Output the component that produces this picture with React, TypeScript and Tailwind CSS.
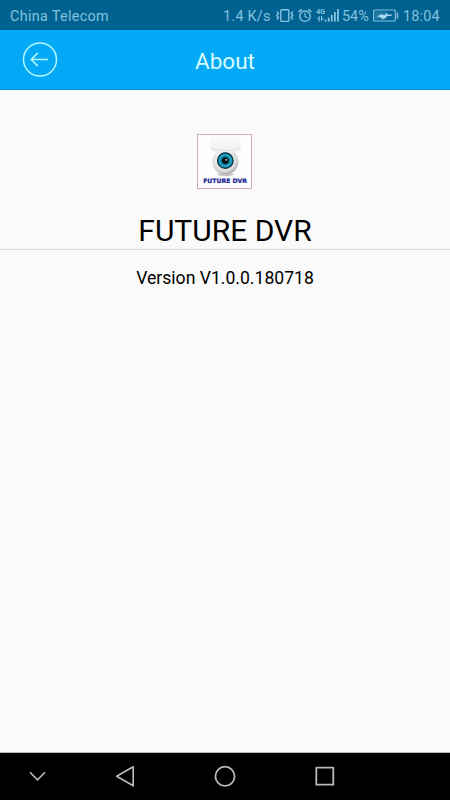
function VibrateIcon() {
  return (
    <svg width="18" height="16" viewBox="0 0 18 16" fill="none" stroke="currentColor">
      <rect x="4.8" y="1.8" width="8" height="11.6" rx="0.8" strokeWidth="1.4" />
      <path d="M0.8 3.6l1.6 2-1.6 2 1.6 2-1.6 2" strokeWidth="1.5" />
      <path d="M16.8 3.6l-1.6 2 1.6 2-1.6 2 1.6 2" strokeWidth="1.5" />
    </svg>
  );
}

function AlarmIcon() {
  return (
    <svg width="14" height="16" viewBox="0 0 14 16" fill="none" stroke="currentColor" strokeLinecap="round">
      <circle cx="7" cy="8.2" r="5.2" strokeWidth="1.4" />
      <path d="M7 5.2v3.2l2.2 1.3" strokeWidth="1.2" />
      <path d="M0.9 3.6L3.4 1.6M13.1 3.6L10.6 1.6" strokeWidth="1.4" />
    </svg>
  );
}

function SignalIcon() {
  return (
    <svg width="25" height="16" viewBox="0 0 25 16" fill="currentColor">
      <text x="0.2" y="6" fontSize="7" fontWeight="700" fontFamily="Roboto, sans-serif">
        4G
      </text>
      <path d="M3.4 8L1 11h1.4v2.6h1.3V8zM5.2 13.6l2.4-3H6.2V8H5v5.6z" />
      <rect x="8.6" y="11.6" width="1.8" height="2" />
      <rect x="11.8" y="9.6" width="1.8" height="4" />
      <rect x="14.9" y="6.8" width="1.8" height="6.8" />
      <rect x="18" y="4" width="1.8" height="9.6" />
      <rect x="21.1" y="1" width="1.8" height="12.6" />
    </svg>
  );
}

function BatteryIcon() {
  return (
    <svg width="26" height="16" viewBox="0 0 26 16" fill="none" stroke="currentColor">
      <rect x="0.7" y="2" width="21.6" height="11" rx="1" strokeWidth="1.2" />
      <rect x="2.2" y="3.6" width="11" height="7.8" fill="currentColor" fillOpacity="0.25" stroke="none" />
      <path d="M24.5 4.6v6" strokeWidth="1.4" />
      <path
        d="M4 8.5l5-2.7v1.3h3l1.4-2.5 1.4 2h4v1.2l-5 .5-1 2h-2l-1.2 1.6-1.2-2.2z"
        fill="#a4d8ec"
        stroke="none"
      />
    </svg>
  );
}

function StatusBar() {
  return (
    <div className="flex h-[30px] shrink-0 items-center bg-[#006290] pl-[10px] pt-px text-[14.4px] leading-[17px] text-[#83c3df]">
      <span className="w-[213px] whitespace-nowrap pt-[2px] tracking-[0.32px]">China Telecom</span>
      <span className="w-[53px] whitespace-nowrap pt-[2px] tracking-[0.25px]">1.4 K/s</span>
      <div className="w-[22px]">
        <VibrateIcon />
      </div>
      <div className="w-[18px]">
        <AlarmIcon />
      </div>
      <div className="w-[26px]">
        <SignalIcon />
      </div>
      <span className="w-[31px] pt-[2px]">54%</span>
      <div className="w-[30px]">
        <BatteryIcon />
      </div>
      <span className="pt-[2px] tracking-[0.2px]">18:04</span>
    </div>
  );
}

function Header() {
  return (
    <header className="grid h-[60px] shrink-0 grid-cols-3 items-center border-b border-[#0598df] bg-[#03a9f6] text-[#d8fbff]">
      <button type="button" aria-label="Back" className="ml-[22px] w-9">
        <svg width="36" height="36" viewBox="0 0 36 36" fill="none" stroke="#b5f7ff" strokeWidth="1.5">
          <circle cx="18" cy="17.5" r="16.5" />
          <path d="M9.4 17.5H26M15.8 10.9L9.2 17.5l6.6 6.6" />
        </svg>
      </button>
      <h1 className="pt-[3px] text-center text-[22.5px] leading-none">About</h1>
    </header>
  );
}

function AppLogo() {
  return (
    <svg width="56" height="56" viewBox="0 0 56 56">
      <defs>
        <linearGradient id="base" x1="0" y1="0" x2="0" y2="1">
          <stop offset="0" stopColor="#fbfbfb" />
          <stop offset="1" stopColor="#efefef" />
        </linearGradient>
        <radialGradient id="dome" cx="0.45" cy="0.4" r="0.6">
          <stop offset="0.5" stopColor="#efefef" />
          <stop offset="0.85" stopColor="#d2d2d2" />
          <stop offset="1" stopColor="#a0a0a0" />
        </radialGradient>
        <radialGradient id="iris">
          <stop offset="0.4" stopColor="#0c6684" />
          <stop offset="0.75" stopColor="#22acd0" />
          <stop offset="1" stopColor="#0c5873" />
        </radialGradient>
      </defs>
      <rect x="0.5" y="0.5" width="54" height="54" fill="#fefefe" stroke="#cfaaaf" />
      <ellipse cx="28.5" cy="40.6" rx="8.5" ry="1.6" fill="#c8c8c8" />
      <circle cx="28.3" cy="27.6" r="13" fill="url(#dome)" />
      <path d="M13.5 5C17 1.2 40 1.2 43.5 5v11c-5 4-25 4-30 0z" fill="url(#base)" />
      <path d="M13.5 13.5c5 4 25 4 30 0" fill="none" stroke="#dcdcdc" strokeWidth="0.9" />
      <circle cx="28.3" cy="26.6" r="7.8" fill="url(#iris)" stroke="#0d3140" strokeWidth="1.2" />
      <circle cx="28.3" cy="26.6" r="3.4" fill="#06141c" />
      <circle cx="29.3" cy="25.8" r="0.9" fill="#d5f3fa" />
      <text
        x="6.2"
        y="49"
        fontSize="6.2"
        fontWeight="700"
        fontFamily="'DejaVu Sans', sans-serif"
        fill="#12158f"
        stroke="#12158f"
        strokeWidth="0.2"
        textLength="43.8"
        lengthAdjust="spacingAndGlyphs"
      >
        FUTURE DVR
      </text>
    </svg>
  );
}

function NavBar() {
  return (
    <nav className="flex h-[48px] shrink-0 items-center border-t border-[#b5b5b5] bg-black pl-[27px] text-[#b9b9b9]">
      <svg className="mr-[68px]" width="20" height="24" viewBox="0 0 20 24" fill="none" stroke="currentColor" strokeWidth="1.6">
        <path d="M3 7.3l7.5 7.5L18 7.3" />
      </svg>
      <svg className="mr-[78px]" width="20" height="24" viewBox="0 0 20 24" fill="none" stroke="currentColor" strokeWidth="1.7" strokeLinejoin="round">
        <path d="M18.2 1.8v19L1.7 11.3z" />
      </svg>
      <svg className="mr-[78px]" width="24" height="24" viewBox="0 0 24 24" fill="none" stroke="currentColor" strokeWidth="1.8">
        <circle cx="12" cy="11.3" r="9.6" />
      </svg>
      <svg width="20" height="24" viewBox="0 0 20 24" fill="none" stroke="currentColor" strokeWidth="1.8" strokeLinejoin="round">
        <rect x="1.3" y="2.7" width="17" height="17" />
      </svg>
    </nav>
  );
}

export default function App() {
  return (
    <div className="flex h-[800px] w-[450px] flex-col overflow-hidden bg-[#fafafa] font-['Roboto',sans-serif]">
      <StatusBar />
      <Header />
      <main className="flex flex-1 flex-col items-center pt-[44px] text-black">
        <AppLogo />
        <h2 className="mt-[23px] flex h-[37px] w-full items-center justify-center border-b border-[#dadada] pb-px text-[30px] leading-none">
          FUTURE DVR
        </h2>
        <p className="mt-[20px] text-[17.6px] leading-none">Version V1.0.0.180718</p>
      </main>
      <NavBar />
    </div>
  );
}
